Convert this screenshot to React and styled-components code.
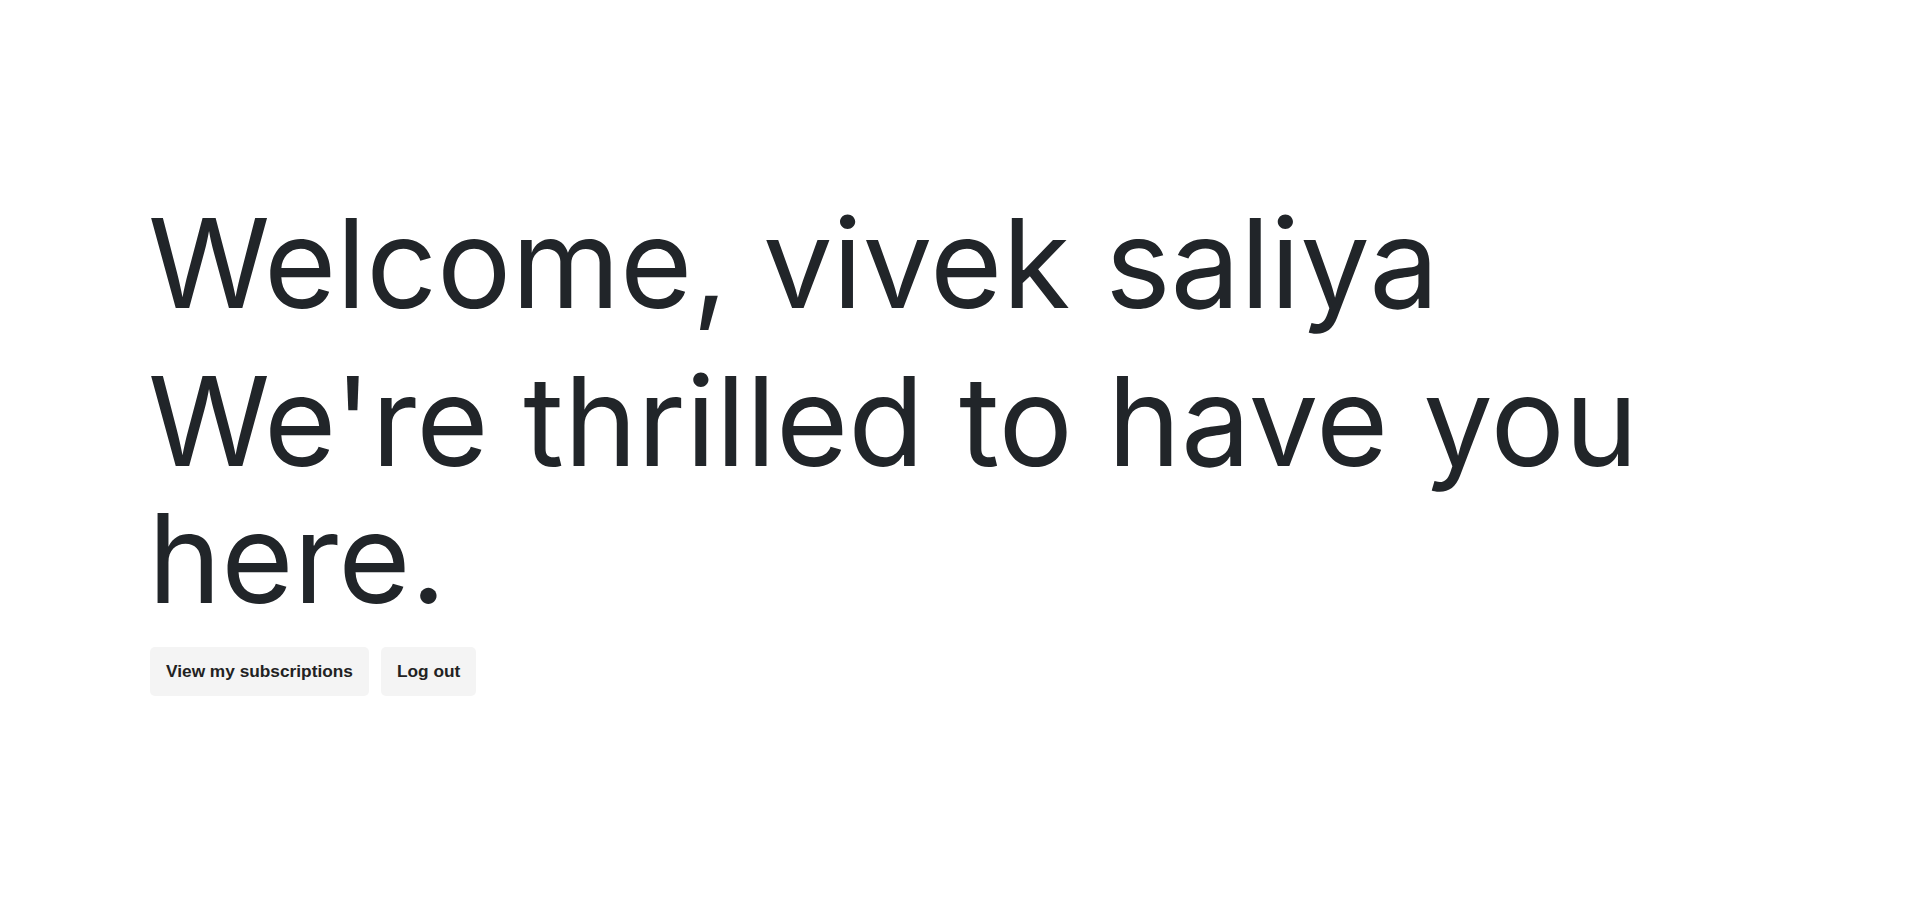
import React from "react";
import styled, { createGlobalStyle } from "styled-components";

const GlobalStyle = createGlobalStyle`
  body {
    margin: 0;
    background: #ffffff;
    color: #212529;
    font-family: Inter, "Noto Sans", sans-serif;
  }
`;

const Page = styled.main`
  min-height: 100vh;
  padding: 195px 0 0 148px;
  box-sizing: border-box;
`;

const Heading = styled.h1`
  margin: 0 0 ${(p) => (p.$gap ? "20px" : "0")};
  font-size: 124px;
  font-weight: 400;
  line-height: 1.11;
  color: #212529;
  max-width: 1560px;
`;

const Actions = styled.div`
  display: flex;
  gap: 12px;
  margin-top: 19px;
  margin-left: 2px;
`;

const Button = styled.button`
  height: 49px;
  padding: 0 16px;
  border: none;
  border-radius: 5px;
  background: #f4f4f4;
  color: #222222;
  font-family: "Liberation Sans", Arial, sans-serif;
  font-weight: 700;
  font-size: 17.3px;
  cursor: pointer;
`;

export default function App() {
  return (
    <Page>
      <GlobalStyle />
      <Heading $gap>Welcome, vivek saliya</Heading>
      <Heading>We're thrilled to have you here.</Heading>
      <Actions>
        <Button>View my subscriptions</Button>
        <Button>Log out</Button>
      </Actions>
    </Page>
  );
}
